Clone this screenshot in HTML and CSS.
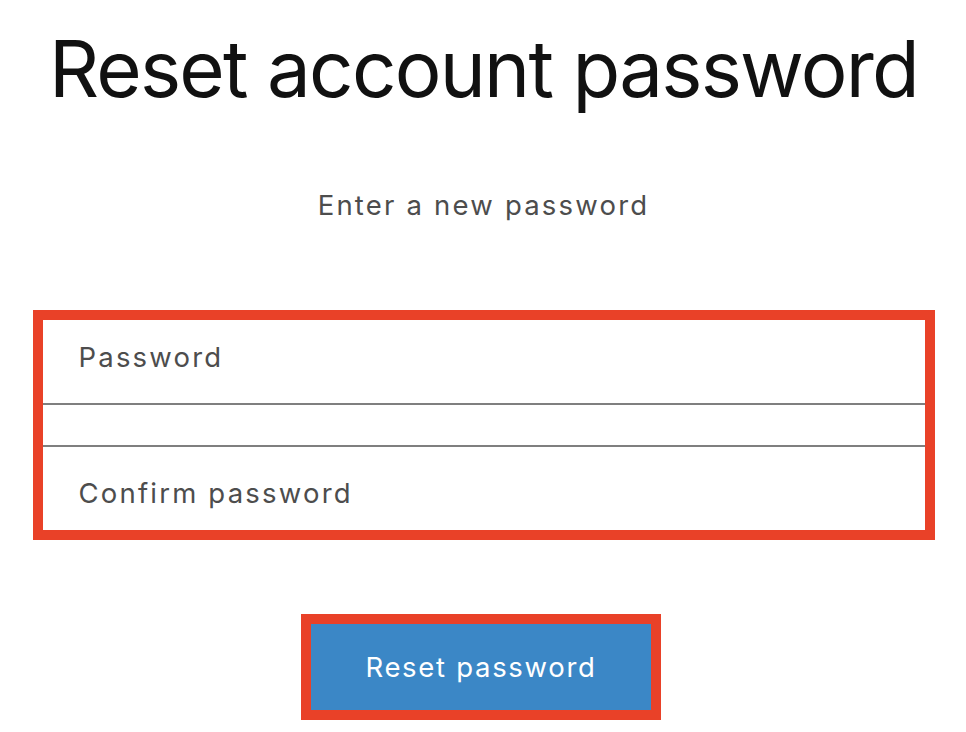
FILE: index.html
```html
<!DOCTYPE html>
<html>
<head>
    <title>Reset account password</title>
    <link rel="stylesheet" href="styles.css">
</head>
<body>
    <div class="reset-page">
        <h1>Reset account password</h1>
        <p class="subtitulo">Enter a new password</p>

        <form action="/reset" method="POST">
            <div class="campos">
                <input type="password" name="password" placeholder="Password" class="campo campo-1">
                <div class="separador"></div>
                <input type="password" name="confirm_password" placeholder="Confirm password" class="campo campo-2">
            </div>

            <div class="acciones">
                <button type="submit" class="btn-reset">Reset password</button>
            </div>
        </form>
    </div>
</body>
</html>
```

FILE: styles.css
```css
body {margin: 0; background: #fff; font-family: Inter, "Noto Sans", sans-serif;}
.reset-page {width: 902px; margin: 0 auto; padding-top: 30px; padding-left: 1px;}
h1 {margin: 0 -40px; font-size: 78px; line-height: 78px; font-weight: 400; color: #111; text-align: center; white-space: nowrap; letter-spacing: -1.75px;}
.subtitulo {margin: 83px 0 0; font-size: 27.5px; line-height: 28px; color: #4d4d4d; text-align: center; letter-spacing: 2.2px;}
.campos {margin-top: 91px; border: 10px solid #e94128; display: flex; flex-direction: column;}
.campo {box-sizing: border-box; height: 85px; border: none; padding: 0 0 0 36px; font-family: inherit; font-size: 27.5px; color: #333; letter-spacing: 2.2px; outline: none; background: #fff;}
.campo::placeholder {color: #4d4d4d;}
.campo-1 {border-bottom: 2px solid #7f7f7f; padding-bottom: 9px;}
.separador {height: 40px;}
.campo-2 {border-top: 2px solid #7f7f7f; padding-top: 8px;}
.acciones {display: flex; justify-content: center; margin-top: 74px; padding-right: 5px;}
.btn-reset {width: 360px; height: 106px; border: 10px solid #e94128; background: #3b87c6; color: #fff; font-family: inherit; font-size: 27.5px; letter-spacing: 1.7px; cursor: pointer; padding: 0;}
```
